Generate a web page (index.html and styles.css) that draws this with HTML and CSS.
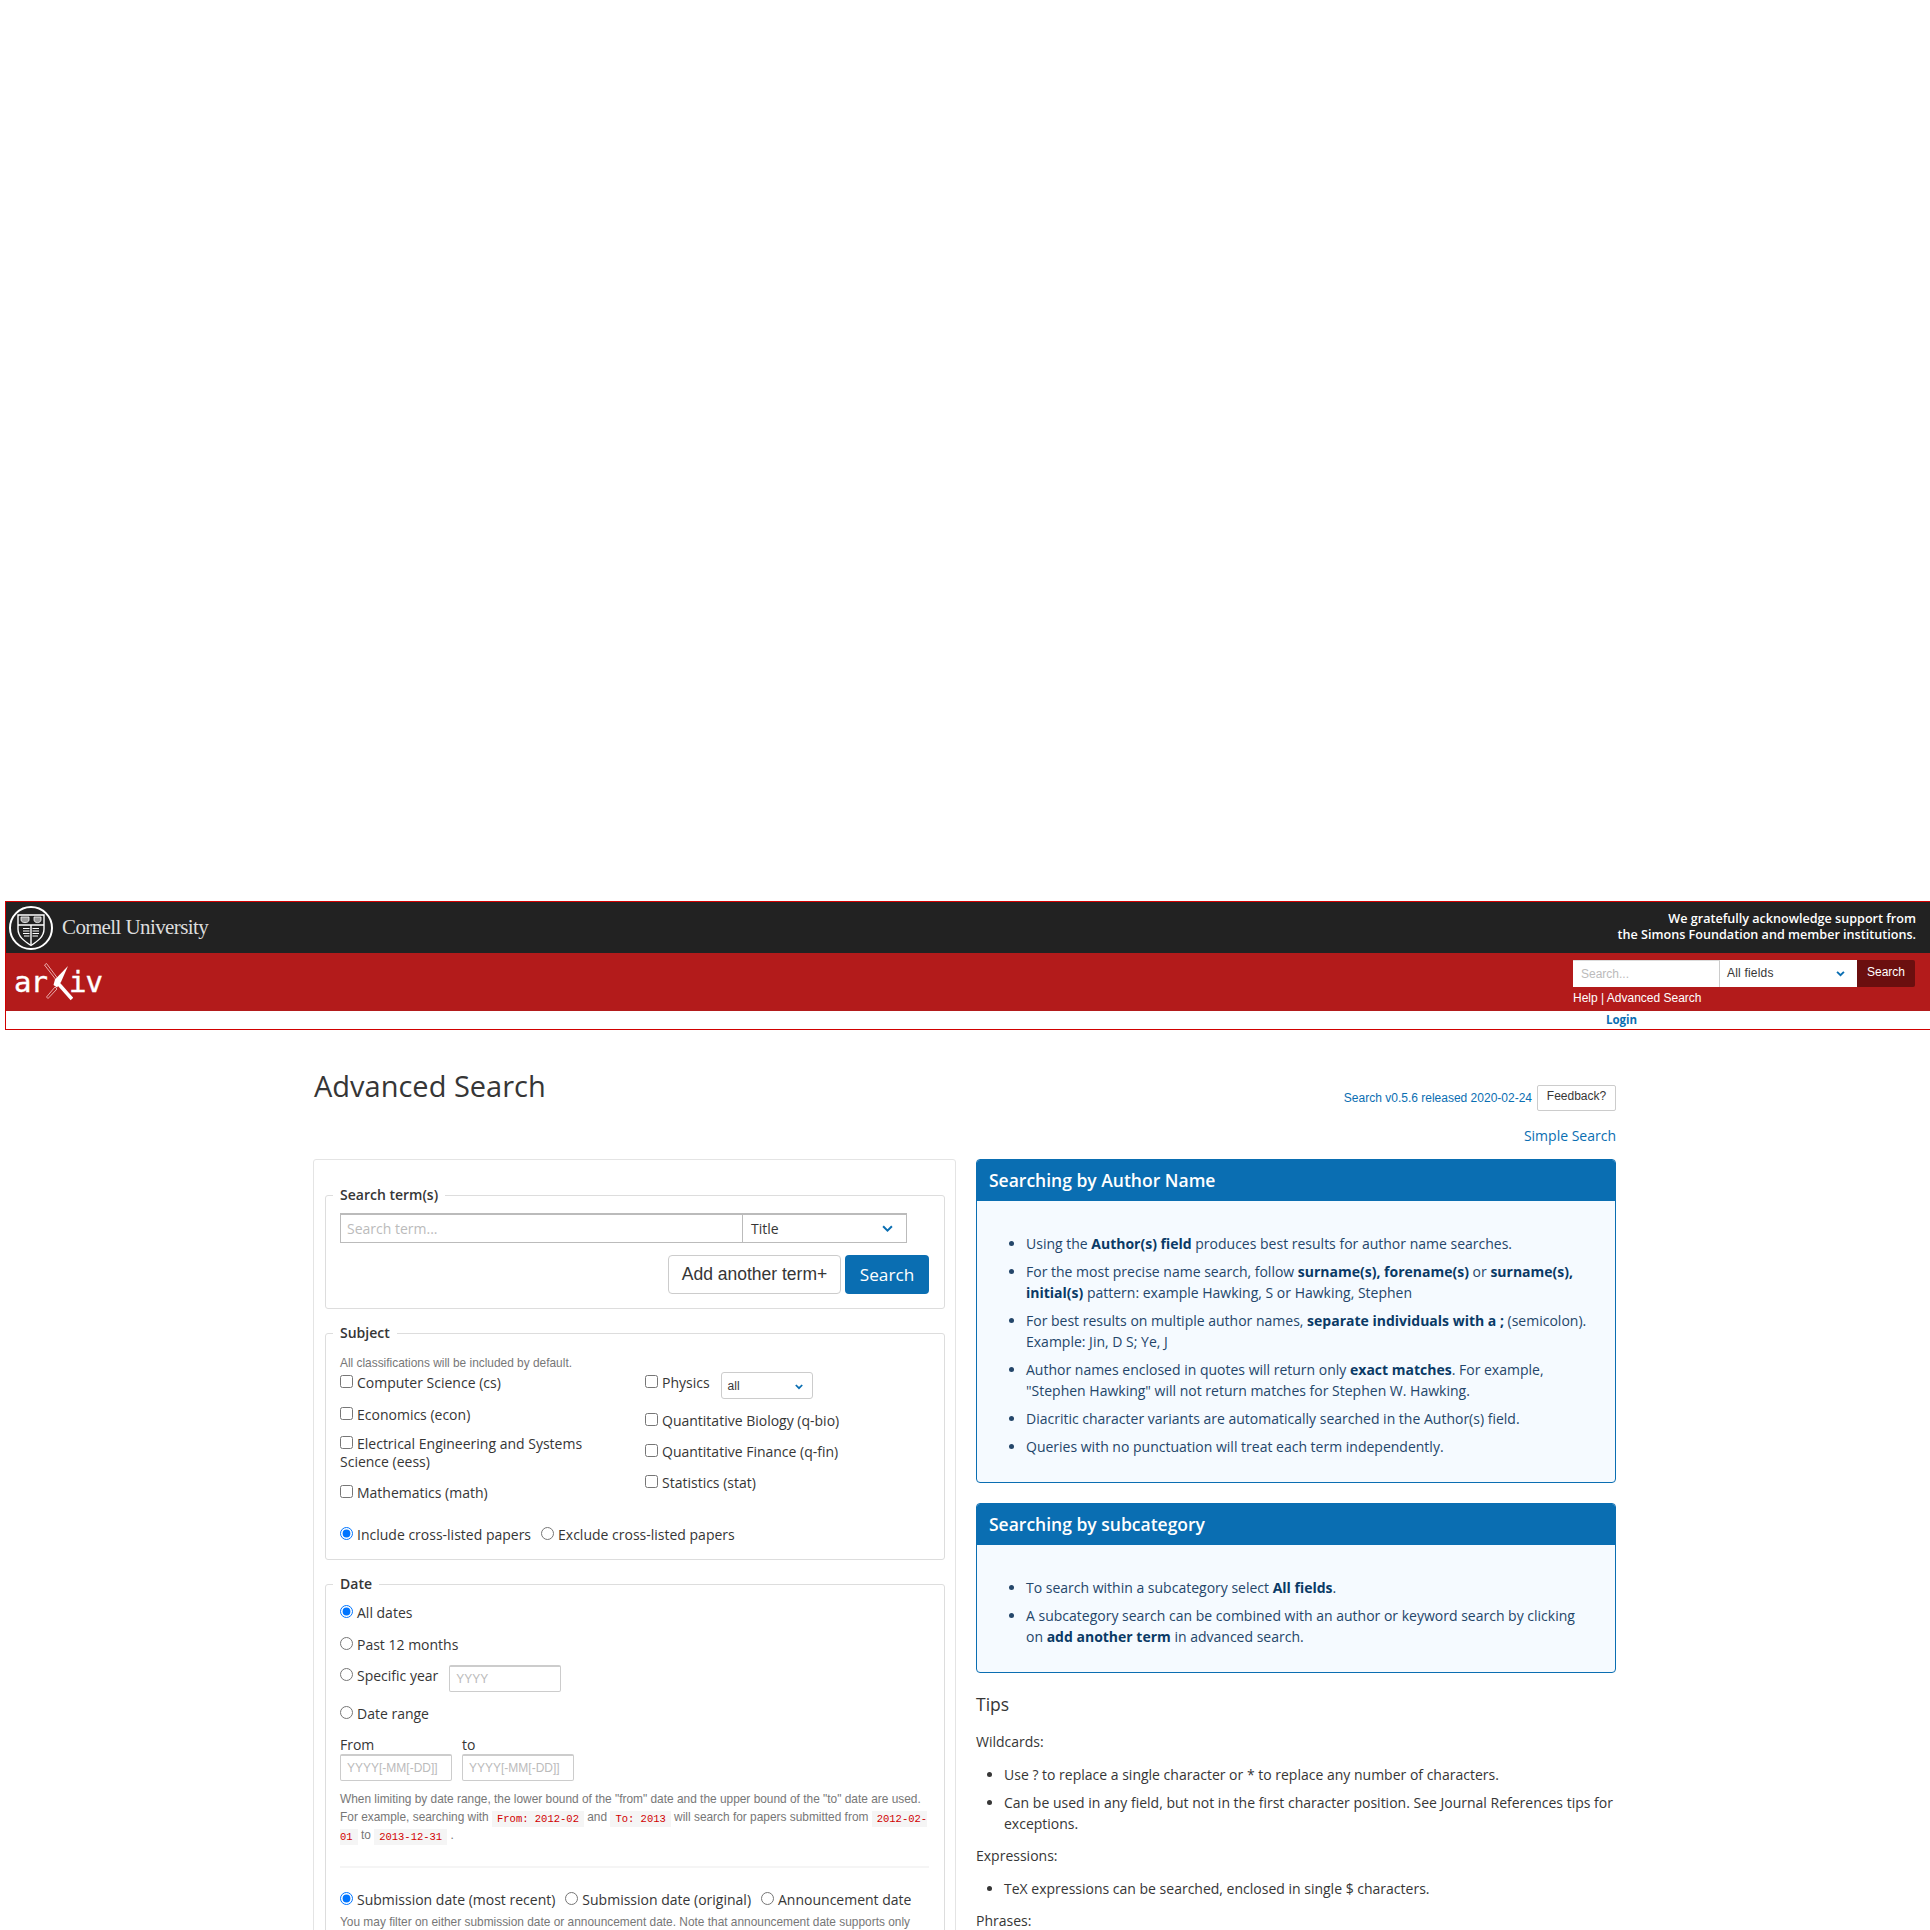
FILE: index.html
```html
<!DOCTYPE html>
<html>
  <head>
    <title>Advanced Search | arXiv e-print repository</title>
    <link rel="stylesheet" href="styles.css">
  </head>
  <body>
    <header class="site-header">
      <div class="identity">
        <a class="cornell" href="#">
          <svg class="seal" viewBox="0 0 44 44" width="44" height="44">
            <circle cx="22" cy="22" r="21" fill="none" stroke="#fff" stroke-width="2"/>
            <path d="M9 9h26v14c0 7.500-6 12-13 16.500C15 35 9 30.500 9 23z" fill="none" stroke="#fff" stroke-width="1.400"/>
            <path d="M9 19h26M22 19v20" fill="none" stroke="#fff" stroke-width="1.400"/>
            <path d="M12 11h8v3c0 1.600-2 2.600-4 2.600s-4-1-4-2.600zM25 11h7v3c0 1.600-1.700 2.600-3.500 2.600S25 15.600 25 14z" fill="#999" stroke="#fff" stroke-width="0.800"/>
            <path d="M14 22.500h6.500M14 25h6.500M14 27.500h6.500M15 30h5.500M23.500 22.500H30M23.500 25H30M23.500 27.500H30M23.500 30H29" fill="none" stroke="#fff" stroke-width="1.100"/>
          </svg>
          <span class="cornell-name">Cornell University</span>
        </a>
        <p class="support">We gratefully acknowledge support from<br>the Simons Foundation and member institutions.</p>
      </div>
      <div class="masthead">
        <a class="logo" href="#">
          <span class="logo-ar">ar</span>
          <svg class="logo-x" viewBox="0 0 30 38" width="30" height="38">
            <path d="M3.500 .5 15.500 16.500 14 18 1.500 2z" fill="none" stroke="#eebbbb" stroke-width="0.900"/>
            <path d="M5 35.500 3.500 34 12 24 14 26z" fill="none" stroke="#eebbbb" stroke-width="0.900"/>
            <path d="M13 18 29 36" fill="none" stroke="#fff" stroke-width="3.600"/>
            <path d="M25 3 12 16.500 10.500 22 14 24.500 18 19z" fill="#fff"/>
          </svg>
          <span class="logo-iv">iv</span>
        </a>
        <div class="quick">
          <form class="quick-form">
            <input class="quick-input" type="text" placeholder="Search...">
            <div class="quick-select">All fields
              <svg class="chevron" viewBox="0 0 10 7" width="9" height="6"><path d="M1 1l4 4 4-4" fill="none" stroke="#0a6eb2" stroke-width="2.200"/></svg>
            </div>
            <button class="quick-button" type="button">Search</button>
          </form>
          <div class="quick-links"><a href="#">Help</a> | <a href="#">Advanced Search</a></div>
        </div>
      </div>
      <div class="login-bar"><a href="#">Login</a></div>
    </header>

    <main class="content">
      <div class="title-row">
        <h1>Advanced Search</h1>
        <div class="meta">
          <div class="release">
            <a href="#">Search v0.5.6 released 2020-02-24</a>
            <button class="feedback" type="button">Feedback?</button>
          </div>
          <a class="simple-link" href="#">Simple Search</a>
        </div>
      </div>

      <div class="columns">
        <form class="search-panel">
          <fieldset class="terms">
            <legend>Search term(s)</legend>
            <div class="term-row">
              <input class="term-input" type="text" placeholder="Search term...">
              <div class="term-select">Title
                <svg class="chevron" viewBox="0 0 10 7" width="11" height="8"><path d="M1 1l4 4 4-4" fill="none" stroke="#0a6eb2" stroke-width="1.800"/></svg>
              </div>
            </div>
            <div class="term-actions">
              <button class="button" type="button">Add another term+</button>
              <button class="button primary" type="button">Search</button>
            </div>
          </fieldset>

          <fieldset class="subject">
            <legend>Subject</legend>
            <p class="help first-help">All classifications will be included by default.</p>
            <div class="subject-grid">
              <div class="subject-left">
                <label class="check"><input type="checkbox">Computer Science (cs)</label>
                <label class="check"><input type="checkbox">Economics (econ)</label>
                <label class="check"><input type="checkbox">Electrical Engineering and Systems Science (eess)</label>
                <label class="check"><input type="checkbox">Mathematics (math)</label>
              </div>
              <div class="subject-right">
                <div class="physics">
                  <label class="check"><input type="checkbox">Physics</label>
                  <div class="physics-select">all
                    <svg class="chevron" viewBox="0 0 10 7" width="8" height="6"><path d="M1 1l4 4 4-4" fill="none" stroke="#0a6eb2" stroke-width="2.200"/></svg>
                  </div>
                </div>
                <label class="check"><input type="checkbox">Quantitative Biology (q-bio)</label>
                <label class="check"><input type="checkbox">Quantitative Finance (q-fin)</label>
                <label class="check"><input type="checkbox">Statistics (stat)</label>
              </div>
            </div>
            <div class="radio-row cross">
              <label class="check"><input type="radio" name="cross" checked>Include cross-listed papers</label>
              <label class="check"><input type="radio" name="cross">Exclude cross-listed papers</label>
            </div>
          </fieldset>

          <fieldset class="date">
            <legend>Date</legend>
            <label class="check all-dates"><input type="radio" name="date" checked>All dates</label>
            <label class="check past"><input type="radio" name="date">Past 12 months</label>
            <div class="year-row">
              <label class="check"><input type="radio" name="date">Specific year</label>
              <input class="date-input" type="text" placeholder="YYYY">
            </div>
            <label class="check range"><input type="radio" name="date">Date range</label>
            <div class="range-row">
              <div class="range-field">
                <span>From</span>
                <input class="date-input" type="text" placeholder="YYYY[-MM[-DD]]">
              </div>
              <div class="range-field">
                <span>to</span>
                <input class="date-input" type="text" placeholder="YYYY[-MM[-DD]]">
              </div>
            </div>
            <p class="help range-help">When limiting by date range, the lower bound of the "from" date and the upper bound of the "to" date are used. For example, searching with <code>From: 2012-02</code> and <code>To: 2013</code> will search for papers submitted from <code>2012-02-01</code> to <code>2013-12-31</code> .</p>
            <hr>
            <div class="radio-row">
              <label class="check"><input type="radio" name="kind" checked>Submission date (most recent)</label>
              <label class="check"><input type="radio" name="kind">Submission date (original)</label>
              <label class="check"><input type="radio" name="kind">Announcement date</label>
            </div>
            <p class="help">You may filter on either submission date or announcement date. Note that announcement date supports only year and month granularity.</p>
          </fieldset>
        </form>

        <aside class="tips">
          <section class="notice">
            <h2>Searching by Author Name</h2>
            <ul>
              <li>Using the <strong>Author(s) field</strong> produces best results for author name searches.</li>
              <li>For the most precise name search, follow <strong>surname(s), forename(s)</strong> or <strong>surname(s), initial(s)</strong> pattern: example Hawking, S or Hawking, Stephen</li>
              <li>For best results on multiple author names, <strong>separate individuals with a ;</strong> (semicolon). Example: Jin, D S; Ye, J</li>
              <li>Author names enclosed in quotes will return only <strong>exact matches</strong>. For example, "Stephen Hawking" will not return matches for Stephen W. Hawking.</li>
              <li>Diacritic character variants are automatically searched in the Author(s) field.</li>
              <li>Queries with no punctuation will treat each term independently.</li>
            </ul>
          </section>
          <section class="notice">
            <h2>Searching by subcategory</h2>
            <ul>
              <li>To search within a subcategory select <strong>All fields</strong>.</li>
              <li>A subcategory search can be combined with an author or keyword search by clicking on <strong>add another term</strong> in advanced search.</li>
            </ul>
          </section>
          <h3>Tips</h3>
          <h4>Wildcards:</h4>
          <ul class="tip-list">
            <li>Use ? to replace a single character or * to replace any number of characters.</li>
            <li>Can be used in any field, but not in the first character position. See Journal References tips for exceptions.</li>
          </ul>
          <h4>Expressions:</h4>
          <ul class="tip-list">
            <li>TeX expressions can be searched, enclosed in single $ characters.</li>
          </ul>
          <h4>Phrases:</h4>
        </aside>
      </div>
    </main>
  </body>
</html>
```

FILE: styles.css
```css
html,
body {
  height: 1930px;
  overflow: hidden;
}

body {
  margin: 0;
  padding-top: 901px;
  box-sizing: border-box;
  font-family: "Open Sans", "Noto Sans", sans-serif;
  font-size: 14px;
  line-height: 21px;
  color: #363636;
  background: #fff;
}

a {
  color: inherit;
  text-decoration: none;
}

/* Header */
.site-header {
  margin-left: 5px;
  border: 1px solid #d10000;
  border-right: 0;
  height: 127px;
}

.identity {
  display: flex;
  justify-content: space-between;
  height: 51px;
  background: #222;
  color: #fff;
}

.cornell {
  display: flex;
  align-items: center;
  margin-left: 3px;
}

.seal {
  margin-top: 1px;
}

.cornell-name {
  margin-left: 9px;
  font-family: "Liberation Serif", serif;
  font-size: 21px;
  letter-spacing: -0.6px;
  color: #ddd;
}

.support {
  margin: 9px 14px 0 0;
  font-size: 12.600px;
  line-height: 16px;
  font-weight: 600;
  text-align: right;
}

.masthead {
  display: flex;
  justify-content: space-between;
  height: 58px;
  background: #b31b1b;
  color: #fff;
}

.logo {
  display: flex;
  align-items: flex-end;
  height: 38px;
  margin: 10px 0 0 8px;
  font-family: "DejaVu Sans Mono", monospace;
  font-size: 29px;
  line-height: 32px;
  letter-spacing: -1px;
  -webkit-text-stroke: 0.4px #fff;
}

.logo-x {
  margin: 0 -4px 0 -4px;
}

.logo-ar,
.logo-iv {
  padding-bottom: 3px;
}

.quick {
  margin: 7px 15px 0 0;
  font-family: "Liberation Sans", sans-serif;
  font-size: 12px;
}

.quick-form {
  display: flex;
  height: 27px;
}

.quick-input {
  width: 147px;
  box-sizing: border-box;
  border: 0;
  border-right: 1px solid #ccc;
  border-top: 1px solid #ddd;
  padding: 0 8px;
  font: inherit;
  outline: 0;
}

.quick-input::placeholder {
  color: #bbb;
}

.quick-select {
  display: flex;
  justify-content: space-between;
  align-items: center;
  width: 137px;
  box-sizing: border-box;
  padding: 0 12px 0 7px;
  background: #fff;
  color: #363636;
  letter-spacing: 0.2px;
}

.quick-button {
  width: 58px;
  padding: 0 0 3px;
  border: 0;
  border-radius: 0 2px 2px 0;
  background: #6b0f0f;
  color: #fff;
  font: inherit;
}

.quick-links {
  margin-top: 2px;
  line-height: 18px;
}

.login-bar {
  height: 18px;
  padding-left: 1600px;
  font-size: 11.500px;
  line-height: 18px;
  font-weight: 700;
  color: #0a6eb2;
}

/* Page */
.content {
  width: 1303px;
  margin: 31px 0 0 313px;
}

.title-row {
  display: flex;
  justify-content: space-between;
  height: 98px;
}

h1 {
  margin: 0 0 0 1px;
  padding-top: 6px;
  font-size: 29px;
  line-height: 38px;
  font-weight: 400;
}

.meta {
  padding-top: 24px;
  text-align: right;
  color: #0a6eb2;
}

.release {
  display: flex;
  align-items: center;
  gap: 5px;
  font-family: "Liberation Sans", sans-serif;
  font-size: 12px;
}

.feedback {
  width: 79px;
  height: 26px;
  padding: 0 0 4px;
  border: 1px solid #ccc;
  border-radius: 2px;
  background: #fff;
  color: #363636;
  font: inherit;
}

.simple-link {
  display: block;
  margin-top: 14px;
}

.columns {
  display: grid;
  grid-template-columns: 643px 640px;
  gap: 20px;
  align-items: start;
}

/* Search form */
.search-panel {
  padding: 25px 10px 0 11px;
  border: 1px solid #e4e4e4;
  border-radius: 3px;
}

fieldset {
  margin: 0 0 14px;
  padding: 0 15px 0 14px;
  border: 1px solid #ddd;
  border-radius: 3px;
}

legend {
  margin-left: -7px;
  padding: 0 7px;
  line-height: 20px;
  font-weight: 600;
}

.term-row {
  display: flex;
  height: 30px;
  width: 567px;
  margin-top: 8px;
  border: 1px solid #bbb;
  border-top-width: 2px;
  box-sizing: border-box;
}

.term-input {
  flex: 1;
  min-width: 0;
  padding: 0 6px;
  border: 0;
  border-right: 1px solid #bbb;
  font: inherit;
  outline: 0;
}

.term-input::placeholder,
.date-input::placeholder {
  color: #bbb;
}

.term-select {
  display: flex;
  justify-content: space-between;
  align-items: center;
  width: 163px;
  box-sizing: border-box;
  padding: 0 13px 0 8px;
}

.term-actions {
  display: flex;
  justify-content: flex-end;
  gap: 4px;
  margin: 12px 0 14px;
}

.button {
  height: 39px;
  padding: 0;
  width: 173px;
  border: 1px solid #ccc;
  border-radius: 4px;
  background: #fff;
  color: #363636;
  font-family: "Liberation Sans", sans-serif;
  font-size: 17.500px;
}

.button.primary {
  width: 84px;
  border: 0;
  background: #0a6eb2;
  color: #fff;
  font-family: "Open Sans", sans-serif;
  font-size: 17.200px;
}

.help {
  margin: 0;
  font-family: "Liberation Sans", sans-serif;
  font-size: 11.900px;
  line-height: 18px;
  color: #777;
}

.first-help {
  margin: 12px 0 3px;
  line-height: 16px;
}

.subject-grid {
  display: grid;
  grid-template-columns: 305px 1fr;
}

.check {
  display: block;
  line-height: 18px;
}

.check input {
  width: 13px;
  height: 13px;
  margin: 0 4px 0 0;
  vertical-align: 0;
}

.subject-left .check {
  margin-bottom: 13px;
  padding-right: 40px;
}

.subject-left .check:nth-child(1) {
  margin-bottom: 14px;
}

.subject-left .check:nth-child(2) {
  margin-bottom: 11px;
}

.subject-left .check:nth-child(4) {
  margin-bottom: 24px;
}

.physics {
  display: flex;
  height: 38px;
}

.physics-select {
  display: flex;
  justify-content: space-between;
  align-items: center;
  width: 92px;
  height: 27px;
  box-sizing: border-box;
  margin: -2px 0 0 11px;
  padding: 2px 9px 0 6px;
  border: 1px solid #ccc;
  border-radius: 3px;
  font-family: "Liberation Sans", sans-serif;
  font-size: 12px;
}

.subject-right > .check {
  margin-bottom: 13px;
}

.radio-row {
  display: flex;
  gap: 10px;
}

.cross {
  margin-bottom: 15px;
}

.all-dates {
  margin-top: 10px;
}

.past {
  margin-top: 14px;
}

.year-row {
  display: flex;
  margin-top: 13px;
}

.year-row .date-input {
  margin: -2px 0 0 11px;
}

.range {
  margin-top: 13px;
}

.range-row {
  display: flex;
  gap: 10px;
  margin-top: 12px;
}

.range-field span {
  display: block;
  line-height: 19px;
}

.date-input {
  display: block;
  width: 112px;
  height: 27px;
  box-sizing: border-box;
  padding: 0 6px;
  border: 1px solid #ccc;
  border-top-width: 2px;
  border-radius: 2px;
  font-family: "Liberation Sans", sans-serif;
  font-size: 12px;
  outline: 0;
}

.range-help {
  margin-top: 9px;
  width: 589px;
}

code {
  position: relative;
  top: 1px;
  padding: 2px 5px;
  background: #f5f5f5;
  color: #d10000;
  font-family: "Liberation Mono", monospace;
  font-size: 10.500px;
  line-height: 13px;
}

hr {
  width: 589px;
  height: 2px;
  margin: 22px 0 23px;
  border: 0;
  background: #f5f5f5;
}

.date .radio-row + .help {
  margin-top: 4px;
  width: 589px;
}

/* Right column */
.notice {
  margin-bottom: 20px;
  border: 1px solid #0a6eb2;
  border-radius: 4px;
  background: #f5faff;
  color: #24466a;
  overflow: hidden;
}

.notice h2 {
  margin: 0;
  padding: 0 12px;
  background: #0a6eb2;
  color: #fff;
  font-size: 17.500px;
  line-height: 41px;
  font-weight: 600;
}

.notice ul {
  margin: 32px 0 25px;
  padding: 0 24px 0 49px;
}

li {
  margin-bottom: 7px;
}

li:last-child {
  margin-bottom: 0;
}

.notice strong {
  color: #0a3a66;
}

h3 {
  margin: 0;
  font-size: 17.500px;
  line-height: 23px;
  font-weight: 400;
}

h4 {
  margin: 15px 0 0;
  font-size: 14px;
  line-height: 21px;
  font-weight: 500;
}

.tip-list {
  margin: 12px 0 0;
  padding: 0 0 0 28px;
}

.tip-list + h4 {
  margin-top: 11px;
}
```
